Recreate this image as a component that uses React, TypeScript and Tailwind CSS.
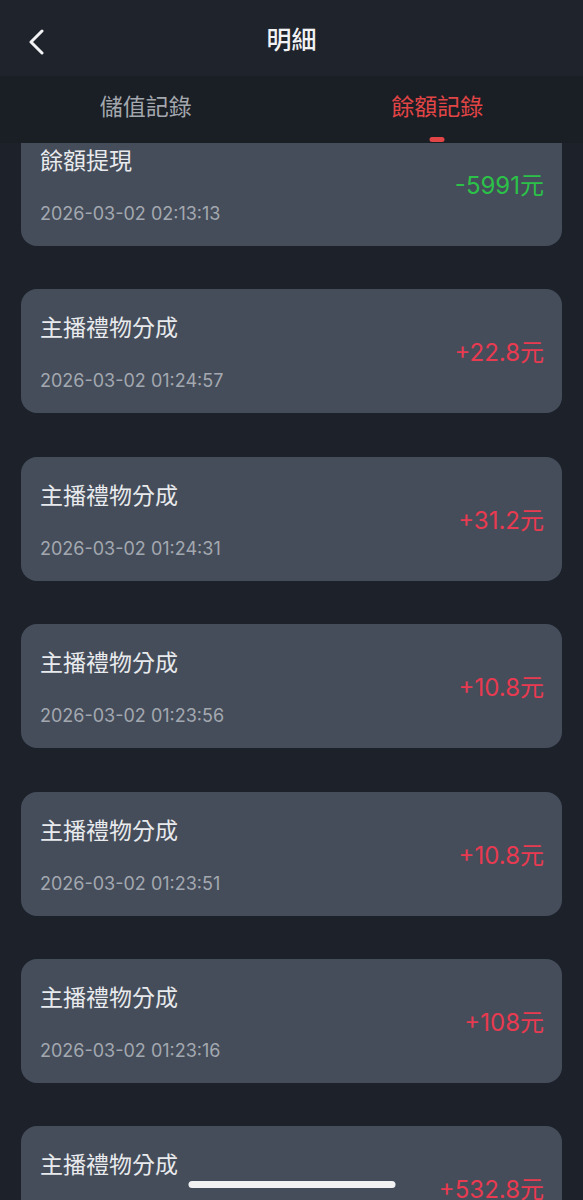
import React from 'react';

const records = [
  { title: '餘額提現', time: '2026-03-02 02:13:13', amount: '-5991元', out: true },
  { title: '主播禮物分成', time: '2026-03-02 01:24:57', amount: '+22.8元' },
  { title: '主播禮物分成', time: '2026-03-02 01:24:31', amount: '+31.2元' },
  { title: '主播禮物分成', time: '2026-03-02 01:23:56', amount: '+10.8元' },
  { title: '主播禮物分成', time: '2026-03-02 01:23:51', amount: '+10.8元' },
  { title: '主播禮物分成', time: '2026-03-02 01:23:16', amount: '+108元' },
  { title: '主播禮物分成', time: '2026-03-02 01:22:40', amount: '+532.8元' },
];

const font = { fontFamily: 'Inter, "Noto Sans CJK TC", sans-serif' };

export default function App() {
  return (
    <div className="relative h-[1200px] w-[583px] overflow-hidden bg-[#1c212a] flex flex-col" style={font}>
      {/* Header */}
      <header className="relative z-10 h-[76px] shrink-0 bg-[#1f232b] flex items-center justify-center pt-[6px]">
        <button className="absolute left-[24px] top-[27px] w-[26px] h-[30px] flex items-center justify-center">
          <svg width="20" height="26" viewBox="0 0 20 26" fill="none">
            <path d="M15 2 L4 13 L15 24" stroke="#f1f2f4" strokeWidth="3" strokeLinecap="round" strokeLinejoin="round" />
          </svg>
        </button>
        <h1 className="text-[25px] font-medium text-[#f1f2f4]">明細</h1>
      </header>

      {/* Tabs */}
      <nav className="relative z-10 h-[67px] shrink-0 bg-[#1a1e25] grid grid-cols-2">
        <div className="flex items-start justify-center pt-[15px]">
          <span className="text-[23px] leading-[32px] text-[#a3a7ae]">儲值記錄</span>
        </div>
        <div className="relative flex items-start justify-center pt-[15px]">
          <span className="text-[23px] leading-[32px] text-[#e24545]">餘額記錄</span>
          <span className="absolute left-1/2 -translate-x-1/2 bottom-[1px] w-[15px] h-[5px] rounded-full bg-[#e24545]" />
        </div>
      </nav>

      {/* List */}
      <main className="flex-1 overflow-hidden">
        <div className="-mt-[21px] flex flex-col gap-[43.4px] px-[21px]">
          {records.map((r, i) => (
            <div key={i} className="h-[124px] shrink-0 rounded-[16px] bg-[#454d5a] flex items-center justify-between pl-[19px] pr-[18px]">
              <div className="flex flex-col self-start pt-[24px]">
                <span className="text-[23px] leading-[30px] text-[#e8eaed]">{r.title}</span>
                <span className="mt-[26px] text-[18px] leading-[24px] text-[#a3a8b0]">{r.time}</span>
              </div>
              <span className={`mt-[4px] text-[24px] leading-[30px] ${r.out ? 'text-[#2cc148]' : 'text-[#e83a50]'}`}>{r.amount}</span>
            </div>
          ))}
        </div>
      </main>

      {/* Home indicator */}
      <div className="absolute bottom-[12px] left-1/2 -translate-x-1/2 w-[207px] h-[7px] rounded-full bg-[#f2f2f2]" />
    </div>
  );
}
